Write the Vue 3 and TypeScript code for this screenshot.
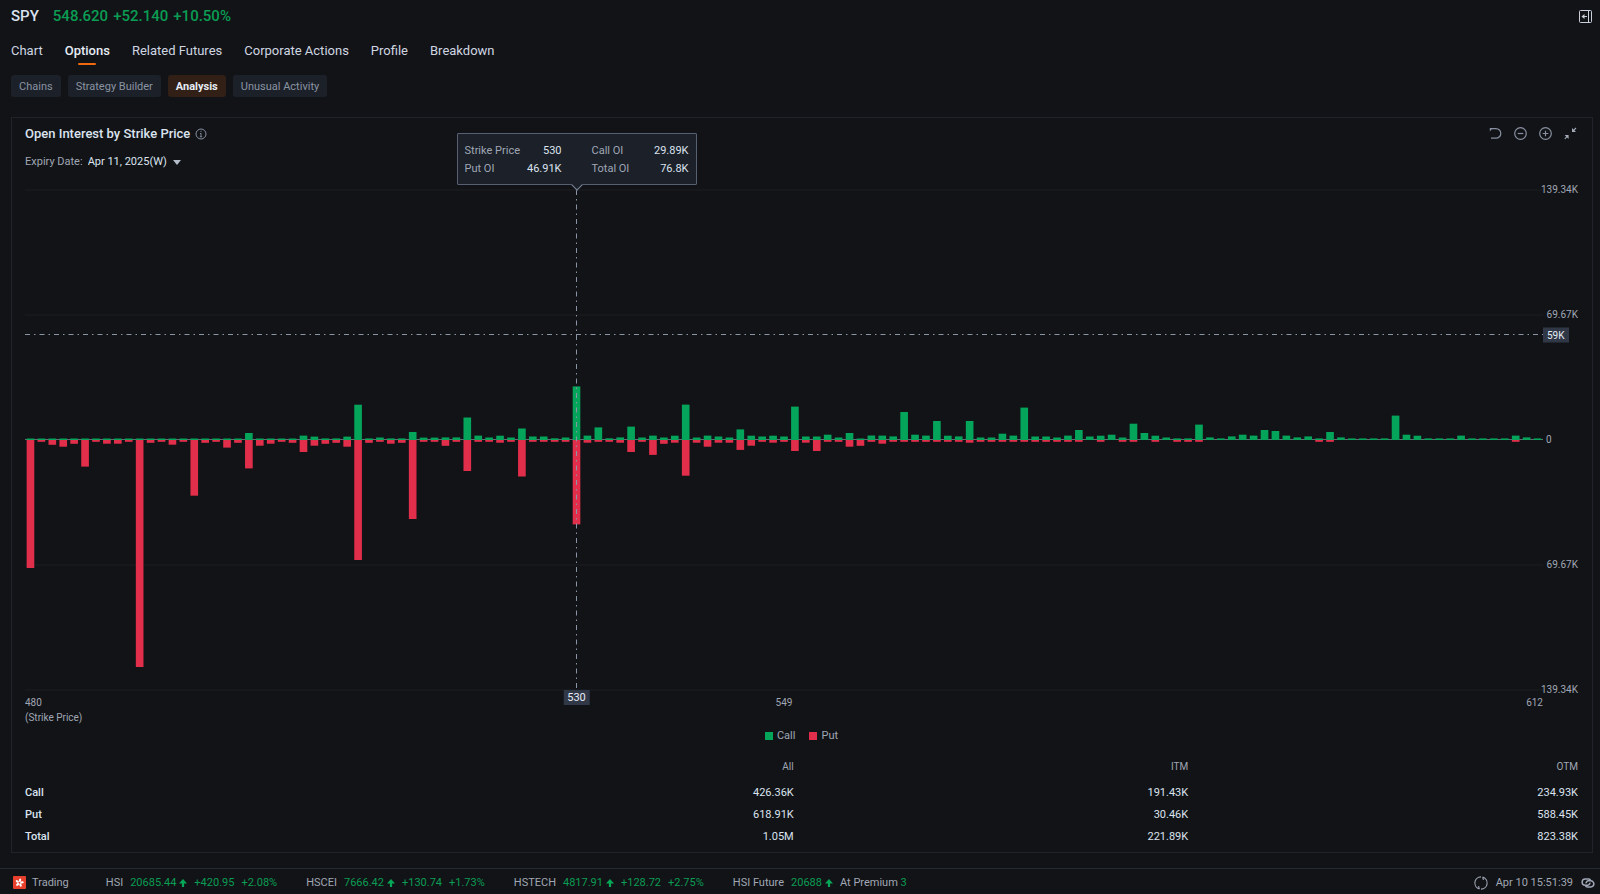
<script setup lang="ts">
import { ref } from 'vue'

interface Quote {
  name: string
  price: string
  change?: string
  percent?: string
  note?: string
  noteValue?: string
}

const tabs = ['Chart', 'Options', 'Related Futures', 'Corporate Actions', 'Profile', 'Breakdown']
const views = ['Chains', 'Strategy Builder', 'Analysis', 'Unusual Activity']
const activeTab = ref('Options')
const activeView = ref('Analysis')
const expiry = ref('Apr 11, 2025(W)')

// Open interest per strike, in units where 250 is the top of the axis (139.34K).
const calls: number[] = [
  1.5, 1.5, 1.5, 1.5, 1.5, 1.5, 1.5, 1.5, 1.5, 1.5, 1.5, 1.5, 1.5, 1.5, 1.5, 1.5, 1.5, 1.5, 1.5, 1.5,
  7, 1.5, 1.5, 1.5, 1.5, 4.4, 3.4, 1.6, 1.6, 3.4, 35.3, 1.6, 2.5, 1.6, 1.6, 8, 2.4, 2.4, 2.6, 2.6,
  22.5, 4.4, 2.5, 4.3, 2.5, 11.5, 3.5, 3.5, 1.7, 2.5, 53.6, 4.4, 12.6, 1.7, 2.6, 13.4, 2.5, 4.4, 2.5, 4.3,
  35.4, 2.5, 4.4, 3.5, 2.5, 10.6, 4.3, 3.5, 4.3, 3.5, 33.4, 3.5, 3.5, 5.3, 2.5, 7, 1.5, 4.5, 4.4, 3.6,
  28, 5.3, 4.4, 19, 4.3, 3.6, 19, 2.5, 2.5, 6.3, 4.4, 32.4, 3.5, 3.5, 2.5, 4.4, 10, 3.5, 4.3, 5.3,
  2.5, 16.3, 7, 4.3, 2.5, 1.6, 1.6, 15.4, 2.6, 1.6, 3.6, 5.3, 4.4, 10, 9, 4.4, 2.6, 3.6, 1.6, 8,
  2.6, 1.6, 1.6, 1.6, 1.6, 24.4, 5.3, 4.3, 1.6, 1.6, 1.6, 4.4, 1.6, 1.6, 1.6, 1.6, 4.4, 2.6, 1.6,
]
const puts: number[] = [
  128, 1.8, 4.8, 6.7, 3.8, 26.6, 1.8, 3.7, 3.7, 1.8, 227, 2.8, 1.8, 4.7, 1.8, 55.7, 2.8, 1.8, 7.6, 2.8,
  28.4, 5.7, 3.7, 1.8, 2.8, 12, 5.7, 3.8, 2.8, 6.7, 120, 2.8, 1.8, 3.7, 2.8, 79, 1.8, 1.8, 5.8, 1.8,
  31, 1.8, 1.8, 2.7, 1.8, 36.5, 1.8, 1.8, 1.8, 1.8, 84.4, 2.7, 1.8, 1.8, 2.7, 12, 1.8, 14.9, 3.8, 2.7,
  35.7, 2.7, 6.7, 2.7, 2.7, 9.9, 5.7, 1.8, 2.7, 1.8, 11, 2.7, 11, 1.8, 1.8, 6.7, 5.8, 1.8, 3.7, 1.8,
  1.8, 1.8, 1.8, 1.8, 1.8, 1.8, 2.7, 1.8, 1.8, 1.8, 1.8, 1.8, 1.8, 1.8, 1.8, 1.8, 1.8, 0, 1.8, 0,
  1.8, 1.8, 0, 1.8, 0, 1.8, 1.8, 1.8, 0, 0, 0, 0, 0, 0, 0, 0, 0, 0, 1.8, 1.8,
  0, 0, 0, 0, 0, 0, 0, 0, 0, 0, 0, 0, 0, 0, 0, 0, 1.8, 0, 0,
]

const selected = 50
const band = 100 / calls.length
const barWidth = `${band * 0.7}%`
const barX = (i: number): string => `${band * (i + 0.15)}%`
const size = (v: number): string => `${v / 5}%`
const callY = (v: number): string => `${50 - v / 5}%`
const crossX = `${band * (selected + 0.5)}%`
const crossY = '28.9%'

const axis = ['139.34K', '69.67K', '0', '69.67K', '139.34K']
const tip = [
  ['Strike Price', '530', 'Call OI', '29.89K'],
  ['Put OI', '46.91K', 'Total OI', '76.8K'],
]
const rows = [
  ['Call', '426.36K', '191.43K', '234.93K'],
  ['Put', '618.91K', '30.46K', '588.45K'],
  ['Total', '1.05M', '221.89K', '823.38K'],
]
const quotes: Quote[] = [
  { name: 'HSI', price: '20685.44', change: '+420.95', percent: '+2.08%' },
  { name: 'HSCEI', price: '7666.42', change: '+130.74', percent: '+1.73%' },
  { name: 'HSTECH', price: '4817.91', change: '+128.72', percent: '+2.75%' },
  { name: 'HSI Future', price: '20688', note: 'At Premium', noteValue: '3' },
]
</script>

<template>
  <div class="page">
    <header class="quote">
      <h1>SPY</h1>
      <p class="up"><span>548.620</span><span>+52.140</span><span>+10.50%</span></p>
      <button class="icon side" type="button" aria-label="Collapse side panel">
        <svg width="13" height="13" viewBox="0 0 13 13" fill="none" stroke="#c9d0dc">
          <rect x="0.5" y="0.5" width="12" height="12" rx="1" />
          <path d="M9.5 .5v12" />
          <path d="M8 6.5H4" />
          <path d="M2.5 6.5 5.5 4v5z" fill="#c9d0dc" stroke="none" />
        </svg>
      </button>
    </header>

    <nav class="tabs">
      <a v-for="t in tabs" :key="t" href="#" :class="{ on: t === activeTab }" @click.prevent="activeTab = t">{{ t }}</a>
    </nav>

    <div class="pills">
      <button v-for="v in views" :key="v" type="button" :class="{ on: v === activeView }" @click="activeView = v">{{ v }}</button>
    </div>

    <main class="card">
      <div class="title">
        <h2>Open Interest by Strike Price</h2>
        <svg width="12" height="12" viewBox="0 0 12 12" fill="none" stroke="#8790a0">
          <circle cx="6" cy="6" r="5" />
          <path d="M6 5.2V9M5 5.5h1M4.8 8.8h2.4M6 2.8v1.2" stroke-width="0.9" />
        </svg>
        <div class="tools">
          <button class="icon" type="button" aria-label="Reset">
            <svg width="13" height="13" viewBox="0 0 13 13" fill="none" stroke="#8790a0" stroke-width="1.2">
              <path d="M2 1.6H7a4.8 4.8 0 0 1 0 9.6H2" />
              <path d="M.8 1v3.4L3.8 1z" fill="#8790a0" stroke="none" />
            </svg>
          </button>
          <button class="icon" type="button" aria-label="Zoom out">
            <svg width="13" height="13" viewBox="0 0 13 13" fill="none" stroke="#8790a0" stroke-width="1.2">
              <circle cx="6.5" cy="6.5" r="5.8" /><path d="M3.7 6.5h5.6" />
            </svg>
          </button>
          <button class="icon" type="button" aria-label="Zoom in">
            <svg width="13" height="13" viewBox="0 0 13 13" fill="none" stroke="#8790a0" stroke-width="1.2">
              <circle cx="6.5" cy="6.5" r="5.8" /><path d="M3.7 6.5h5.6M6.5 3.7v5.6" />
            </svg>
          </button>
          <button class="icon" type="button" aria-label="Exit full view">
            <svg width="13" height="13" viewBox="0 0 13 13" fill="#a3abb9" stroke="#a3abb9">
              <path d="M8 1v4h4z M4.6 12V8H.6z" stroke="none" />
              <path d="M9.4 3.6 12 1M3.2 9.4 .8 11.8" stroke-width="1.1" />
            </svg>
          </button>
        </div>
      </div>

      <div class="expiry">
        <label for="expiry">Expiry Date:</label>
        <select id="expiry" v-model="expiry"><option>Apr 11, 2025(W)</option></select>
        <svg width="8" height="5" viewBox="0 0 8 5"><path d="M0 0h8L4 5z" fill="#b4bcc9" /></svg>
      </div>

      <div class="chart">
        <div class="plot">
          <svg class="canvas" role="img" aria-label="Open interest by strike price">
            <g class="grid">
              <line v-for="y in ['0%', '25%', '75%', '100%']" :key="y" x1="0" x2="100%" :y1="y" :y2="y" />
            </g>
            <rect class="zero" x="0" y="50%" width="100%" height="1" />
            <g class="put">
              <rect v-for="(v, i) in puts" :key="i" :x="barX(i)" y="50%" :width="barWidth" :height="size(v)" />
            </g>
            <g class="call">
              <rect v-for="(v, i) in calls" :key="i" :x="barX(i)" :y="callY(v)" :width="barWidth" :height="size(v)" />
            </g>
            <g class="cross">
              <line :x1="crossX" :x2="crossX" y1="0" y2="100%" />
              <line x1="0" x2="100%" :y1="crossY" :y2="crossY" />
            </g>
          </svg>
          <div class="tooltip" :style="{ left: crossX }">
            <dl v-for="r in tip" :key="r[0]">
              <dt>{{ r[0] }}</dt><dd>{{ r[1] }}</dd><dt class="second">{{ r[2] }}</dt><dd>{{ r[3] }}</dd>
            </dl>
          </div>
          <span class="tag below" :style="{ left: crossX }">530</span>
        </div>
        <div class="axis">
          <span v-for="(a, i) in axis" :key="i" :class="{ origin: a === '0' }">{{ a }}</span>
          <span class="tag beside" :style="{ top: crossY }">59K</span>
        </div>
      </div>

      <div class="strikes">
        <span>480<br>(Strike Price)</span><span>549</span><span>612</span>
      </div>

      <div class="legend">
        <span><i class="call"></i>Call</span><span><i class="put"></i>Put</span>
      </div>

      <table>
        <colgroup><col class="c1"><col class="c2"><col class="c3"><col></colgroup>
        <thead>
          <tr><td></td><th scope="col">All</th><th scope="col">ITM</th><th scope="col">OTM</th></tr>
        </thead>
        <tbody>
          <tr v-for="r in rows" :key="r[0]">
            <th scope="row">{{ r[0] }}</th><td v-for="v in r.slice(1)" :key="v">{{ v }}</td>
          </tr>
        </tbody>
      </table>
    </main>

    <footer>
      <div class="market">
        <svg width="13" height="13" viewBox="0 0 13 13">
          <rect width="13" height="13" rx="1" fill="#e8402c" />
          <g fill="#fff">
            <ellipse v-for="a in [0, 72, 144, 216, 288]" :key="a" cx="6.5" cy="4.2" rx="1.1" ry="1.8" :transform="`rotate(${a + 12} 6.5 6.7)`" />
          </g>
          <circle cx="6.5" cy="6.7" r="0.6" fill="#e8402c" />
        </svg>
        <span>Trading</span>
      </div>
      <div v-for="q in quotes" :key="q.name" class="ticker">
        <span>{{ q.name }}</span>
        <span class="up price">{{ q.price }}
          <svg width="8" height="8" viewBox="0 0 8 8"><path d="M4 0 8 4.4H5.1V8H2.9V4.4H0z" fill="#06a857" /></svg>
        </span>
        <span v-if="q.change" class="up">{{ q.change }}</span>
        <span v-if="q.percent" class="up">{{ q.percent }}</span>
        <span v-if="q.note">{{ q.note }} <b class="up">{{ q.noteValue }}</b></span>
      </div>
      <div class="clock">
        <svg width="14" height="14" viewBox="0 0 14 14" fill="none" stroke="#a0a8b6" stroke-width="1.1">
          <path d="M5.4 12.9A6.1 6.1 0 0 1 7 .9M8.6 1.1A6.1 6.1 0 0 1 7 13.1" />
          <path d="M8.8 1.1 9.4 4M5.2 12.9 4.6 10" />
        </svg>
        <time>Apr 10 15:51:39</time>
        <svg width="14" height="10" viewBox="0 0 14 10" fill="none" stroke="#a0a8b6" stroke-width="1.5">
          <path d="M8.9 4.6a2.4 2.4 0 0 1-2.2 2.6H4.2A3 3 0 0 1 4.2 1.1h3.4a3 3 0 0 1 2 .9" />
          <path d="M5.1 5.4a2.4 2.4 0 0 1 2.2-2.6h2.5a3 3 0 0 1 0 6.1H6.4a3 3 0 0 1-2-.9" />
        </svg>
      </div>
    </footer>
  </div>
</template>

<style>
body {
  margin: 0;
  background: #121317;
}
</style>

<style scoped>
.page {
  display: flex;
  flex-direction: column;
  box-sizing: border-box;
  min-height: 100vh;
  background: #121317;
  color: #a0a7b4;
  font-family: Roboto, "Liberation Sans", sans-serif;
  font-size: 11px;
  line-height: 14px;
}
h1, h2, p, dl, dd {
  margin: 0;
}
button, select {
  margin: 0;
  padding: 0;
  border: 0;
  background: none;
  color: inherit;
  font: inherit;
  cursor: pointer;
}
svg {
  display: block;
}
.up {
  color: #0a9d53;
  font-weight: 400;
}
.quote {
  display: flex;
  align-items: center;
  gap: 14px;
  height: 32px;
  padding: 0 8px 0 11px;
  font-size: 15px;
}
.quote h1 {
  color: #dbe3ef;
  font-size: 15px;
  font-weight: 500;
}
.quote .up {
  display: flex;
  gap: 5px;
  font-weight: 500;
}
.side {
  margin-left: auto;
}
.tabs {
  display: flex;
  gap: 22px;
  height: 38px;
  padding: 0 11px;
  font-size: 13px;
  line-height: 38px;
}
.tabs a {
  position: relative;
  color: #cfd6e2;
  text-decoration: none;
}
.tabs .on {
  color: #e6ecf5;
  font-weight: 500;
}
.tabs .on::after {
  content: "";
  position: absolute;
  left: 50%;
  bottom: 5px;
  width: 18px;
  height: 2px;
  border-radius: 1px;
  background: #f0690f;
  transform: translateX(-50%);
}
.pills {
  display: flex;
  gap: 7px;
  padding: 5px 11px 20px;
}
.pills button {
  height: 22px;
  padding: 2px 8px 0;
  border-radius: 3px;
  background: #1c2129;
  color: #8a93a2;
}
.pills .on {
  background: #321f16;
  color: #e6ecf5;
  font-weight: 700;
}
.card {
  display: flex;
  flex: 1;
  flex-direction: column;
  margin: 0 7px 15px 11px;
  padding: 0 14px 5px 13px;
  border: 1px solid #202329;
}
.title {
  display: flex;
  align-items: center;
  gap: 5px;
  height: 32px;
}
.title h2 {
  color: #dbe3ef;
  font-size: 13px;
  font-weight: 500;
}
.tools {
  display: flex;
  gap: 12px;
  margin: 0 1px 1px auto;
}
.expiry {
  display: flex;
  align-items: center;
  height: 24px;
  margin-bottom: 16px;
}
.expiry select {
  margin: 0 5px;
  appearance: none;
  color: #dbe3ef;
}
.chart {
  display: flex;
  flex: 1;
}
.plot {
  position: relative;
  flex: 1;
  min-height: 300px;
}
.canvas {
  position: absolute;
  width: 100%;
  height: 100%;
  overflow: visible;
}
.grid line {
  stroke: #1c1e23;
}
.zero {
  fill: #656b77;
  transform: translateY(-1px);
}
.call {
  fill: #04a45b;
  background: #04a45b;
}
.put {
  fill: #e12e4a;
  background: #e12e4a;
}
.cross line {
  stroke: #8a94a5;
  stroke-dasharray: 5 4 1.5 4;
}
.tooltip {
  position: absolute;
  top: -57px;
  box-sizing: border-box;
  width: 240px;
  padding: 8px 7px 6px;
  border: 1px solid #566072;
  border-radius: 1px;
  background: #1b2029;
  transform: translateX(-50%);
}
.tooltip::after {
  content: "";
  position: absolute;
  left: 50%;
  bottom: -5px;
  width: 7px;
  height: 7px;
  border: solid #7b8698;
  border-width: 0 1px 1px 0;
  background: #1b2029;
  transform: translateX(-50%) rotate(45deg);
}
.tooltip dl {
  display: grid;
  grid-template-columns: 60px 37px 89px 38px;
  line-height: 18px;
}
.tooltip dt {
  white-space: nowrap;
}
.tooltip .second {
  padding-left: 30px;
}
.tooltip dd {
  color: #dbe3ef;
  text-align: right;
}
.tag {
  position: absolute;
  padding: 0 4px;
  background: #303847;
  color: #e6ecf5;
  line-height: 15px;
}
.below {
  top: 100%;
  transform: translateX(-50%);
}
.axis {
  position: relative;
  display: flex;
  flex-direction: column;
  justify-content: space-between;
  align-items: flex-end;
  width: 35px;
  font-size: 10px;
}
.axis > span:not(.tag) {
  height: 0;
  line-height: 0;
}
.axis .origin {
  align-self: flex-start;
  margin-left: 3px;
}
.axis .beside {
  left: 0;
  transform: translateY(-50%);
}
.strikes {
  display: grid;
  grid-template-columns: 1fr auto 1fr;
  padding: 5px 35px 1px 0;
  font-size: 10px;
  line-height: 15px;
}
.strikes span:last-child {
  text-align: right;
}
.legend {
  display: flex;
  justify-content: center;
  gap: 14px;
  height: 20px;
  margin-bottom: 5px;
}
.legend span {
  display: flex;
  align-items: center;
  gap: 4px;
}
.legend i {
  width: 8px;
  height: 8px;
}
table {
  width: 100%;
  border-collapse: collapse;
  table-layout: fixed;
}
.c1 {
  width: 24%;
}
.c2 {
  width: 25.5%;
}
.c3 {
  width: 25.4%;
}
td, th {
  box-sizing: border-box;
  height: 22px;
  padding: 2px 0 0;
  text-align: right;
}
thead td, thead th {
  height: 30px;
  font-size: 10px;
  font-weight: 400;
}
tbody {
  color: #dbe3ef;
}
tbody th {
  font-weight: 500;
  text-align: left;
}
footer {
  display: flex;
  align-items: center;
  box-sizing: border-box;
  height: 26px;
  padding: 2px 5px 0 13px;
  border-top: 1px solid #262a33;
}
.market {
  display: flex;
  align-items: center;
  gap: 6px;
  margin-right: 37px;
}
.ticker {
  display: flex;
  gap: 7px;
  margin-right: 29px;
}
.price {
  display: flex;
  align-items: center;
  gap: 3px;
}
.clock {
  display: flex;
  align-items: center;
  gap: 8px;
  margin-left: auto;
}
</style>
